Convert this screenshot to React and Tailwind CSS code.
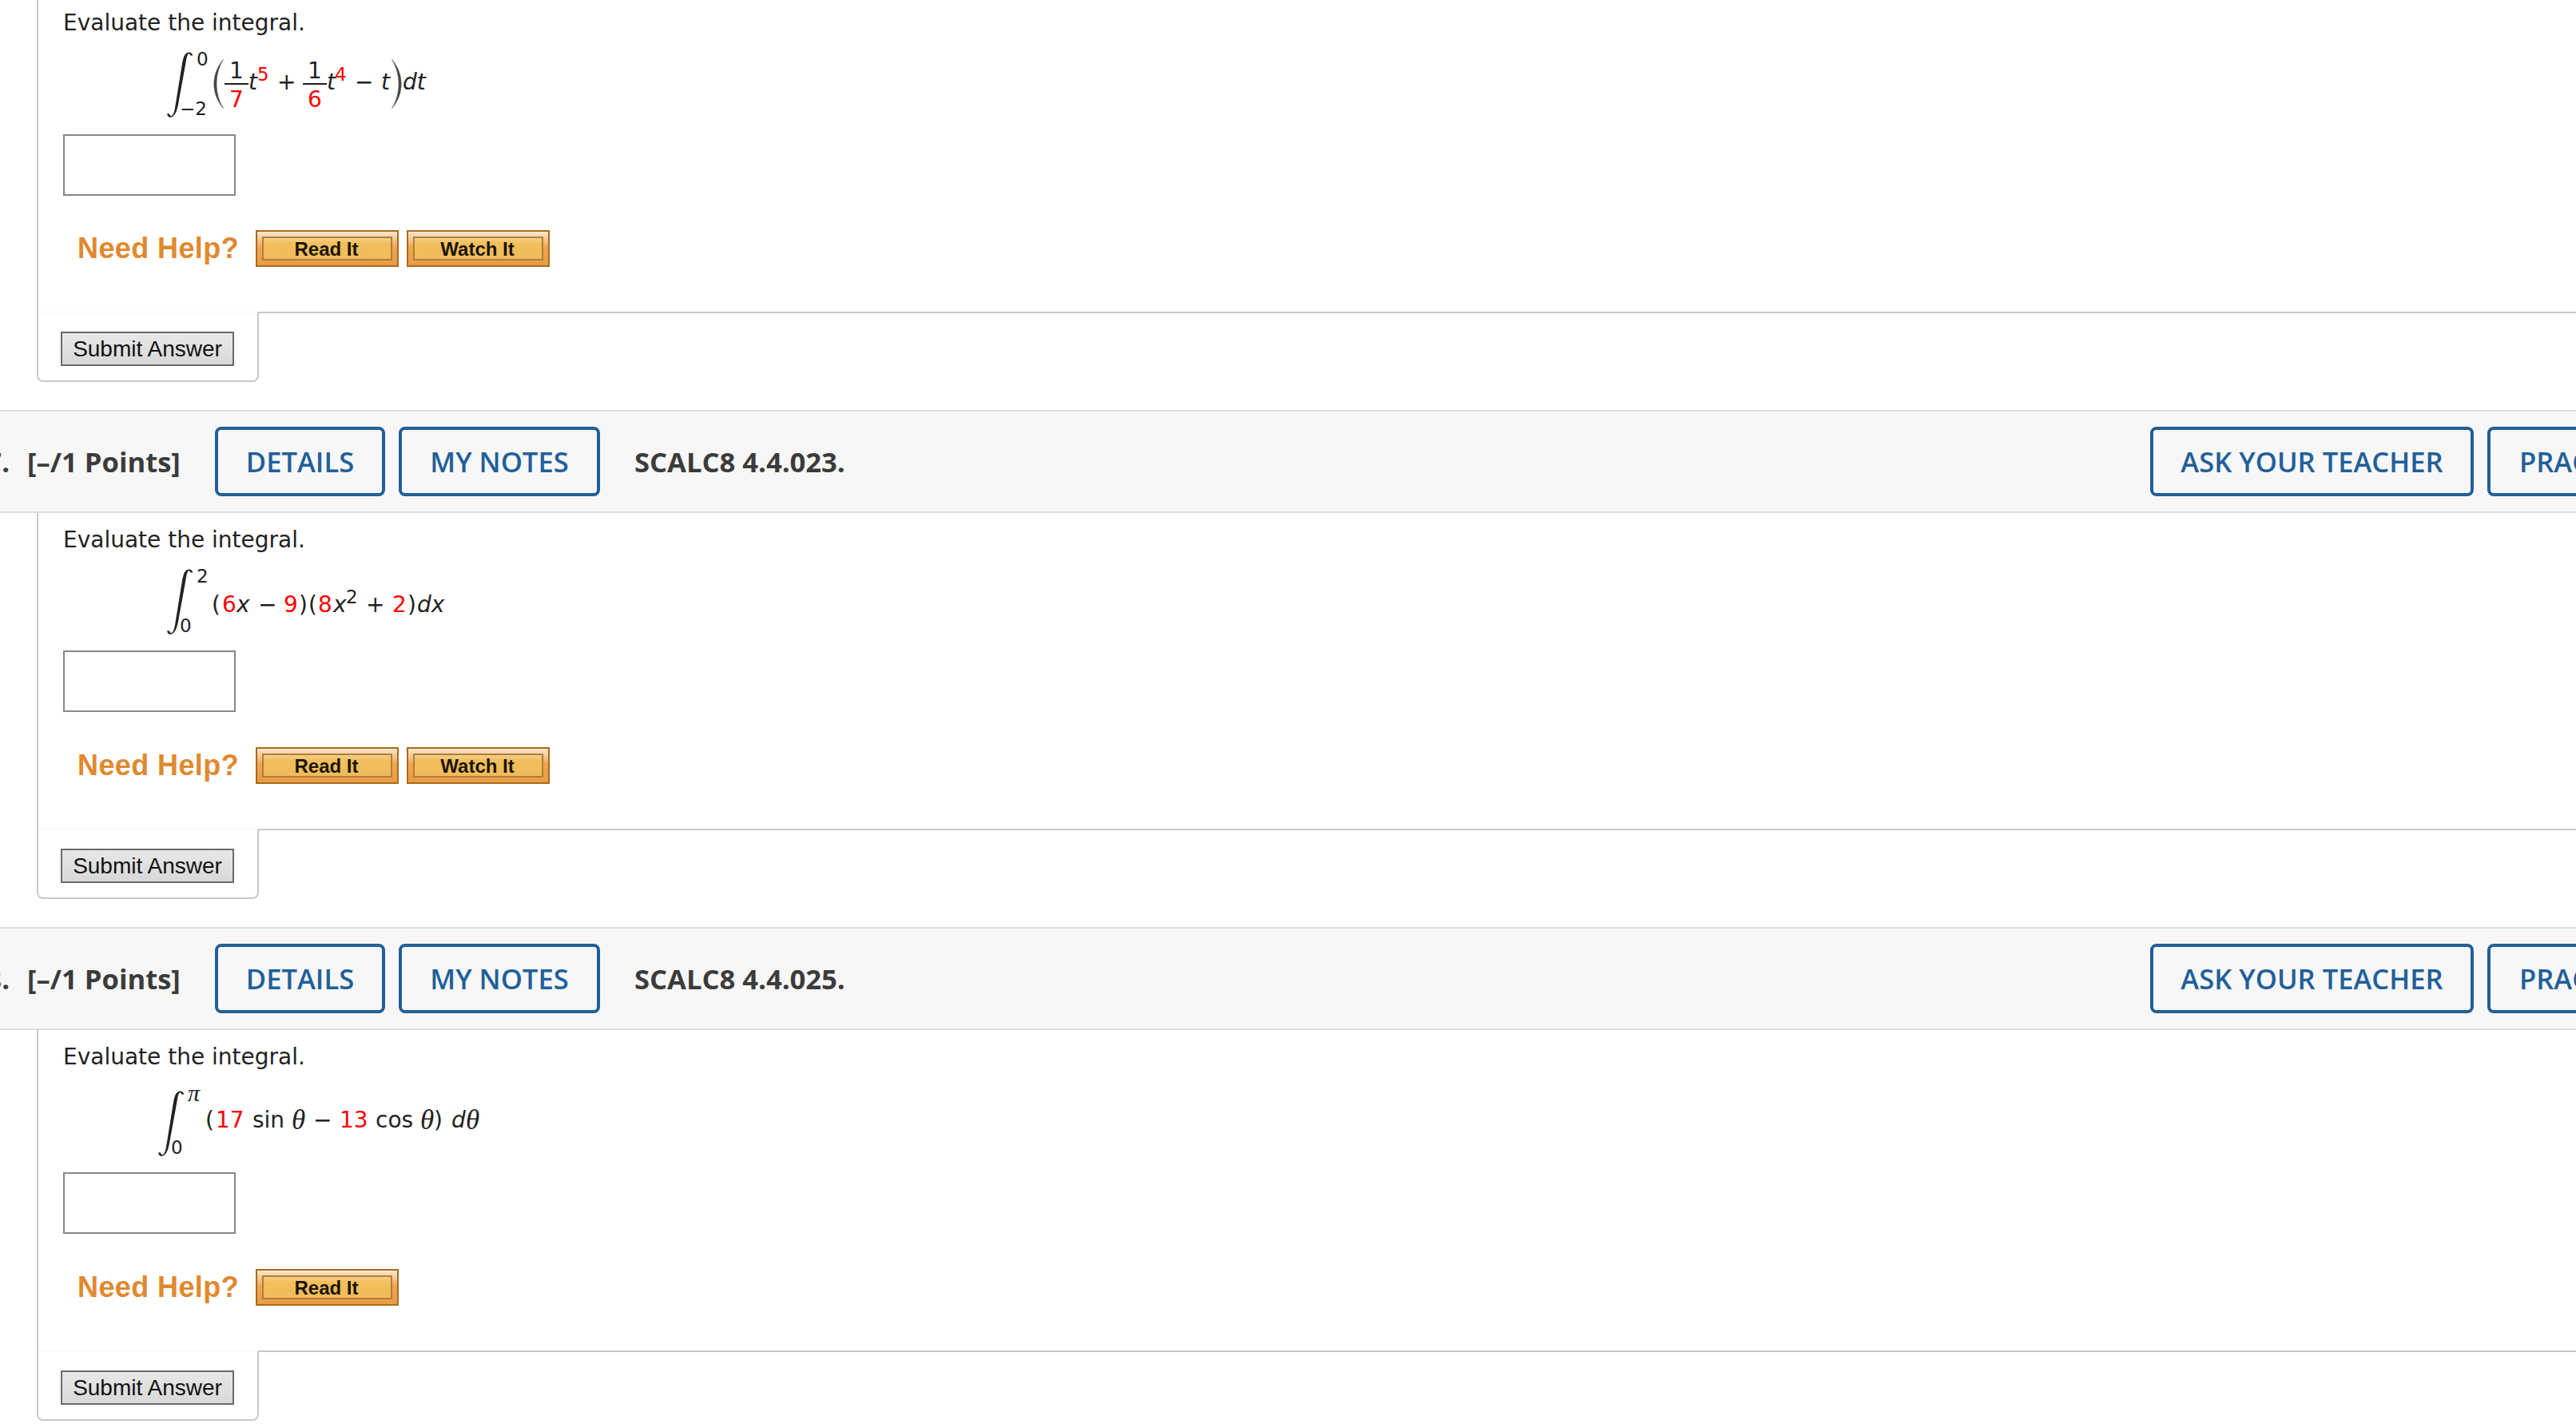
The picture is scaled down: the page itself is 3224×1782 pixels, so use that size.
import clsx from 'clsx';

// one run of math text; w is the advance to the next run
function T({ w, it, red, children }) {
  return (
    <span className={clsx('shrink-0 whitespace-pre', w, it && 'italic', red && 'text-[#f00]')}>{children}</span>
  );
}

function Theta({ w }) {
  return (
    <i className={clsx("shrink-0 font-['Liberation_Serif',serif] text-[35px] leading-[34px]", w)}>θ</i>
  );
}

function Sup({ w, red, children }) {
  return (
    <span className={clsx('-mt-[4px] shrink-0 text-[23px] leading-[23px]', w, red && 'text-[#f00]')}>{children}</span>
  );
}

function Frac({ top, bottom }) {
  return (
    <span className="-mt-[11px] flex w-[30px] shrink-0 flex-col items-center leading-[28px]">
      <span>{top}</span>
      <span className="mt-[1px] h-[2px] w-[30px] bg-[#222]" />
      <span className="mt-[5px] text-[#f00]">{bottom}</span>
    </span>
  );
}

function Paren({ right }) {
  return (
    <svg viewBox="0 0 13 62" className={clsx('-mt-[12px] h-[62px] w-[13px] shrink-0', right && '-scale-x-100')}>
      <path d="M12.4 0.4 C-3 19 -3 43 12.4 61.6 C1.2 43 1.2 19 12.4 0.4 Z" fill="#444" stroke="#555" strokeWidth="0.6" />
    </svg>
  );
}

function Integral({ upper, lower }) {
  return (
    <>
      <svg viewBox="0 0 33 82" className="-ml-[1px] h-[82px] w-[33px] shrink-0">
        <path
          d="M0.3 77 L3 77.5 Q3.6 80.2 5.6 80 Q8.6 79.3 10.2 69 L19.4 12 Q21.6 0.6 27.4 0.4 Q31.8 0.6 32.2 4.6 L29.4 4.6 Q28.8 2 27 2.2 Q25 2.8 23.6 13 L13.6 68 Q10.6 81.8 4 81.8 Q0.3 81.6 0.3 77 Z"
          fill="#222"
        />
      </svg>
      <div className="-ml-[17px] -mt-[2px] flex h-[85px] w-[39px] shrink-0 flex-col justify-between text-[23px] leading-[23px]">
        <span className="pl-[21px]">{upper}</span>
        <span>{lower}</span>
      </div>
    </>
  );
}

function HelpButton({ children }) {
  return (
    <button className="h-[46px] w-[179px] border-2 border-[#a86c1c] bg-linear-to-b from-[#fbe6cd] via-[#efa654] via-45% to-[#e99b45] p-[6px]">
      <span className="flex h-full items-center justify-center border-2 border-[#b07f3a] bg-linear-to-b from-[#f6cf8c] via-[#f2bf5c] via-25% to-[#f0bb58] pt-[2px] pr-[2px] font-['Liberation_Sans',Arial,sans-serif] text-[24px] leading-none font-bold text-[#1a1505]">
        {children}
      </span>
    </button>
  );
}

function Question({ mathHeight, math, gap = 'mt-[44px]', help }) {
  return (
    <section className="pl-[46px] font-['DejaVu_Sans',Verdana,sans-serif] text-[28px] leading-[34px] text-[#222]">
      <div className="border-l-2 border-[#c8c8c8] pt-[17px] pl-[31px]">
        <p className="whitespace-pre">Evaluate the integral.</p>
        <div className={clsx('flex items-start', mathHeight)}>{math}</div>
        <input type="text" className="block h-[77px] w-[216px] border-2 border-[#888] bg-white" />
        <div className={clsx('flex h-[102px] items-start', gap)}>
          <span className="w-[241px] pt-[3px] pl-[18px] font-['Liberation_Sans',Arial,sans-serif] text-[36px] leading-[40px] font-bold tracking-[0.4px] whitespace-pre text-[#e0892f]">
            Need Help?
          </span>
          <div className="flex gap-[10px]">
            {help.map((h) => <HelpButton key={h}>{h}</HelpButton>)}
          </div>
        </div>
      </div>
      <div className="flex h-[123px] items-start">
        <div className="h-[88px] w-[278px] rounded-b-[8px] border-2 border-t border-[#c8c8c8] border-t-[#f5f5f5] pt-[24px] pl-[28px]">
          <button className="block h-[43px] w-[217px] border-2 border-[#6a6a6a] bg-linear-to-b from-[#e8e8e8] to-[#d8d8d8] font-['Liberation_Sans',Arial,sans-serif] text-[28px] leading-[36px] whitespace-pre text-[#111]">
            Submit Answer
          </button>
        </div>
        <div className="h-[2px] flex-1 bg-[#c8c8c8]" />
      </div>
    </section>
  );
}

function BarButton({ w, children }) {
  return (
    <button className={clsx('h-[87px] shrink-0 rounded-[8px] border-4 border-[#225f99] font-semibold whitespace-pre text-[#225f99]', w)}>
      {children}
    </button>
  );
}

function QuestionBar({ number, code }) {
  return (
    <header className="flex h-[129px] items-center overflow-hidden border-y-2 border-[#ddd] bg-[#f7f7f7] font-['Open_Sans',sans-serif] text-[34.6px] leading-[48px]">
      <div className="flex w-[12px] shrink-0 justify-end font-bold text-[#3b3b3b]">{number}</div>
      <div className="w-[257px] shrink-0 pl-[22px] font-bold whitespace-pre text-[#3b3b3b]">[–/1 Points]</div>
      <BarButton w="w-[213px]">DETAILS</BarButton>
      <BarButton w="ml-[17px] w-[252px]">MY NOTES</BarButton>
      <div className="flex-1 pl-[43px] font-bold whitespace-pre text-[#3b3b3b]">{code}</div>
      <BarButton w="w-[405px]">ASK YOUR TEACHER</BarButton>
      <div className="ml-[17px] w-[111px] shrink-0">
        <BarButton w="w-[440px] pl-[36px] text-left">PRACTICE ANOTHER</BarButton>
      </div>
    </header>
  );
}

function App() {
  return (
    <main className="h-[1782px] w-full overflow-hidden bg-white">
      <div className="-mt-[5px]">
        <Question
          mathHeight="h-[122px] pt-[19px] pl-[131px]"
          gap="mt-[43px]"
          help={['Read It', 'Watch It']}
          math={
            <>
              <Integral upper="0" lower="−2" />
              <div className="mt-[21px] ml-[3px] flex items-start">
                <Paren />
                <span className="w-[1px]" />
                <Frac top="1" bottom="7" />
                <T w="w-[11px]" it>t</T>
                <Sup w="w-[25px]" red>5</Sup>
                <T w="w-[32px]">+</T>
                <Frac top="1" bottom="6" />
                <T w="w-[10px]" it>t</T>
                <Sup w="w-[25px]" red>4</Sup>
                <T w="w-[33px]">−</T>
                <T w="w-[13px]" it>t</T>
                <Paren right />
                <T w="w-[40px] pl-[1px]" it>dt</T>
              </div>
            </>
          }
        />
      </div>
      <QuestionBar number="7." code="SCALC8 4.4.023." />
      <Question
        mathHeight="h-[121px] pt-[19px] pl-[131px]"
        help={['Read It', 'Watch It']}
        math={
          <>
            <Integral upper="2" lower="0" />
            <div className="mt-[28px] ml-[1px] flex items-start">
              <T w="w-[13px]">(</T>
              <T w="w-[18px]" red>6</T>
              <T w="w-[27px]" it>x</T>
              <T w="w-[32px]">−</T>
              <T w="w-[19px]" red>9</T>
              <T w="w-[12px]">)</T>
              <T w="w-[12px]">(</T>
              <T w="w-[19px]" red>8</T>
              <T w="w-[16px]" it>x</T>
              <Sup w="w-[25px]">2</Sup>
              <T w="w-[33px]">+</T>
              <T w="w-[19px]" red>2</T>
              <T w="w-[12px]">)</T>
              <T w="w-[40px]" it>dx</T>
            </div>
          </>
        }
      />
      <QuestionBar number="8." code="SCALC8 4.4.025." />
      <Question
        mathHeight="h-[127px] pt-[25px] pl-[120px]"
        help={['Read It']}
        math={
          <>
            <Integral
              upper={<i className="block font-['Liberation_Serif',serif] text-[30px] leading-[10px]">π</i>}
              lower="0"
            />
            <div className="mt-[20px] ml-[4px] flex items-start">
              <T w="w-[13px]">(</T>
              <T w="w-[46px]" red>17</T>
              <T w="w-[49px]">sin</T>
              <Theta w="w-[27px]" />
              <T w="w-[33px]">−</T>
              <T w="w-[45px]" red>13</T>
              <T w="w-[56px]">cos</T>
              <Theta w="w-[17px]" />
              <T w="w-[22px]">)</T>
              <T w="w-[18px]" it>d</T>
              <Theta w="w-[20px]" />
            </div>
          </>
        }
      />
    </main>
  );
}

export default App;
